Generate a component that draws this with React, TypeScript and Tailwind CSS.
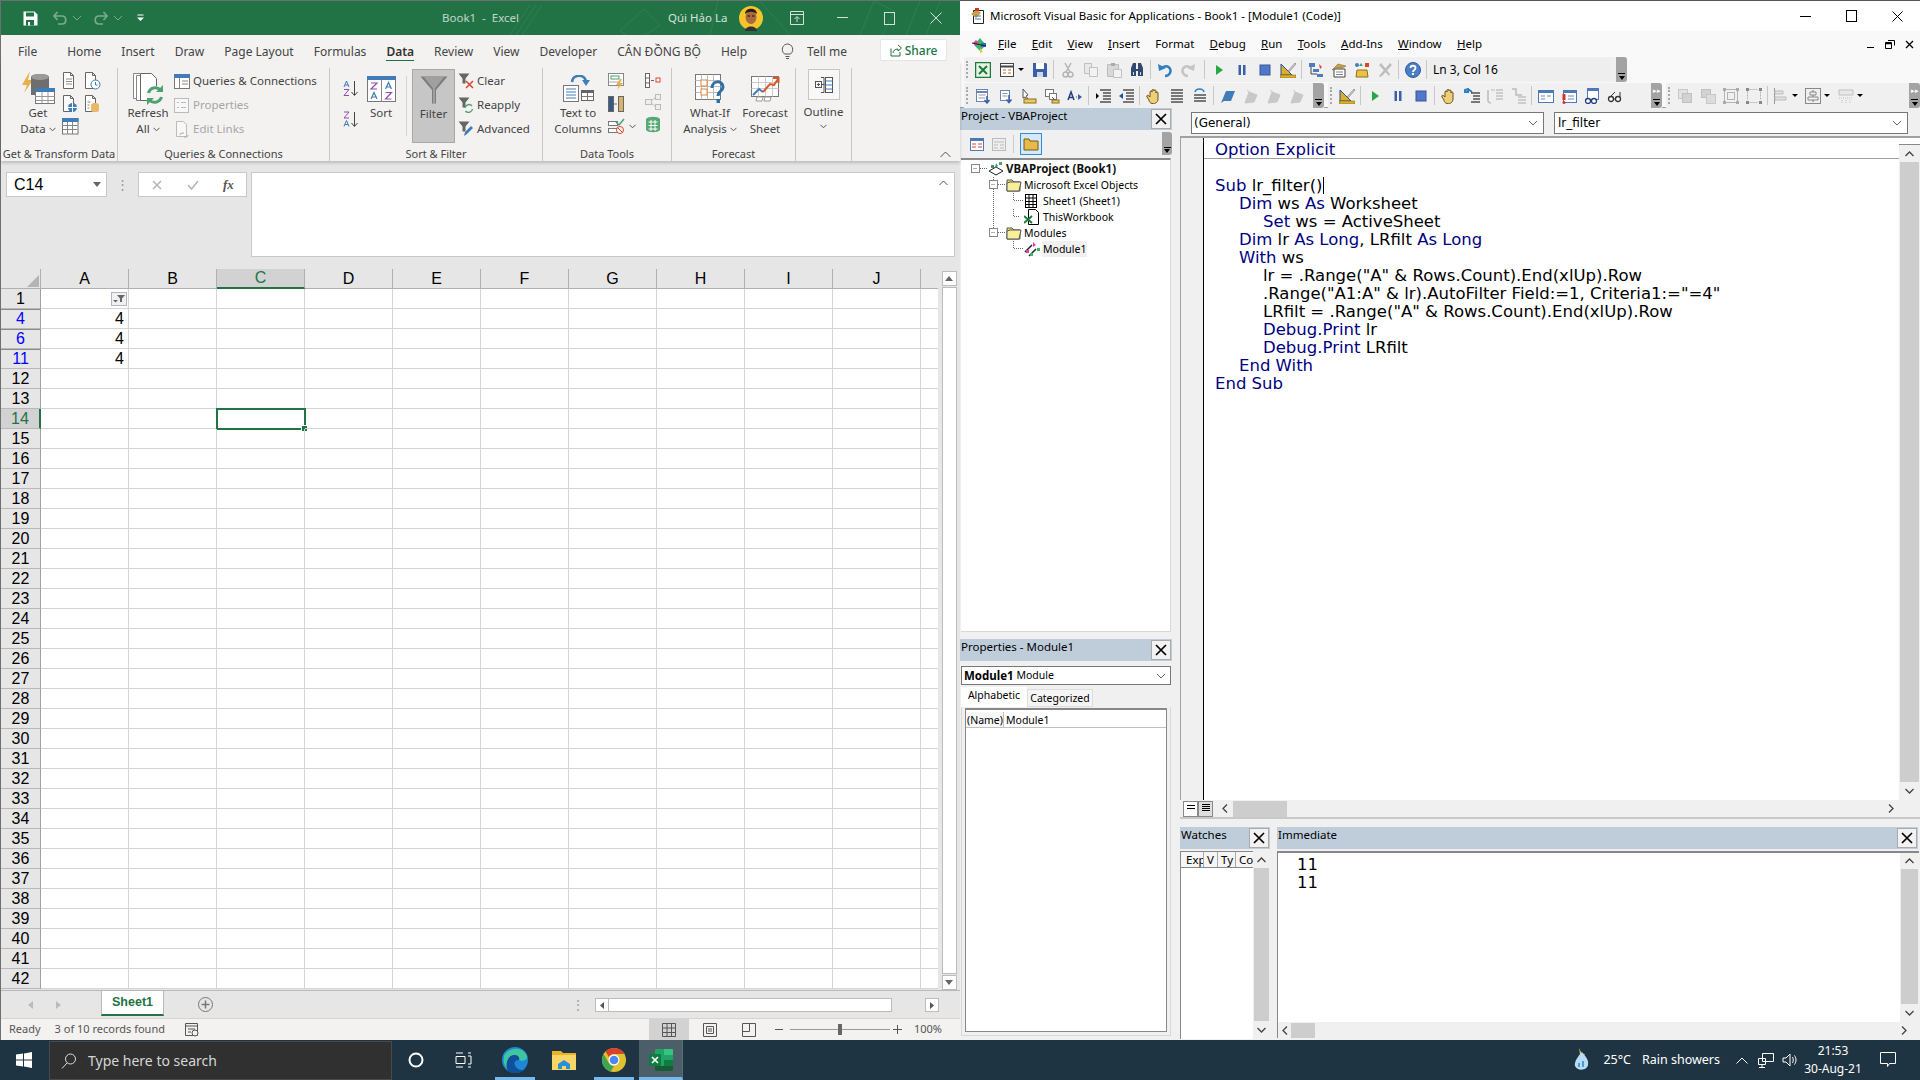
import React from 'react';

type SP = { w?: number; h?: number; v?: string; className?: string; children?: React.ReactNode };
const S = ({ w = 16, h = 16, v, className, children }: SP) => (
    <svg width={w} height={h} viewBox={v || `0 0 ${w} ${h}`} className={`shrink-0 ${className || ''}`} fill="none">{children}</svg>
);

const Caret = ({ c = '#555' }: { c?: string }) => (
    <S w={7} h={5}><path d="M.5 .8 3.5 3.8 6.5 .8" stroke={c} /></S>
);

// ---------- ribbon icons
const Doc = ({ c = '#666' }: { c?: string }) => <path d="M1.5 .5h7l3 3v13h-10z M8.5 .5v3h3" stroke={c} fill="#fff" />;
const IcGetData = () => (
    <S w={34} h={36}>
        <path d="M9 0 1 14h5L3 22 12 9H7z" fill="#e8b04c" />
        <path d="M10 6c0-4 18-4 18 0v18H10z" fill="#6e6e6e" />
        <ellipse cx="19" cy="6" rx="9" ry="3" fill="#9a9a9a" />
        <rect x="14.500" y="17.500" width="19" height="15" fill="#fff" stroke="#777" />
        <rect x="14" y="17" width="20" height="4" fill="#3f7cb8" />
        <path d="M14.500 25.500h19M14.500 29.500h19M21 21v11M27 21v11" stroke="#999" />
    </S>
);
const IcText = () => <S w={16} h={18}><Doc /><path d="M4 7h6M4 9.500h6M4 12h6" stroke="#888" /></S>;
const IcWeb = () => <S w={16} h={18}><Doc /><circle cx="10.500" cy="12.500" r="4.500" fill="#3f7cb8" /><path d="M6 12.500h9M10.500 8v9" stroke="#fff" /></S>;
const IcRecent = () => <S w={17} h={18}><Doc /><circle cx="11.500" cy="12.500" r="4.500" fill="#fff" stroke="#3f7cb8" /><path d="M11.500 10v3h2" stroke="#3f7cb8" /></S>;
const IcExisting = () => <S w={17} h={18}><Doc /><path d="M7 9.500c0-2 8-2 8 0v6c0 2-8 2-8 0z" fill="#e8b96a" /><path d="M3.500 7h3M3.500 10h2M3.500 13h2" stroke="#888" /></S>;
const IcTable = () => (
    <S w={17} h={17}>
        <rect x=".5" y=".5" width="15.500" height="15.500" fill="#fff" stroke="#777" />
        <rect width="16.500" height="4" fill="#3f7cb8" />
        <path d="M.5 7.500h15M.5 11.500h15M5.500 4v12M10.500 4v12" stroke="#888" />
    </S>
);
const IcRefresh = () => (
    <S w={33} h={33}>
        <path d="M1.500 1.500h14v25h-14z" fill="#fff" stroke="#888" />
        <path d="M4.500 3.500h14v25h-14z" fill="#fff" stroke="#888" />
        <path d="M8.500 1.500h11l5 5v22h-16z" fill="#fff" stroke="#666" />
        <circle cx="23" cy="23" r="9" fill="#f3f2f1" />
        <path d="M16.500 21a7 7 0 0 1 12-3M29.500 25a7 7 0 0 1-12 3" stroke="#4ea072" strokeWidth="3" />
        <path d="M31 13v7h-7zM15 33v-7h7z" fill="#4ea072" />
    </S>
);
const IcQueries = () => (
    <S w={16} h={15}>
        <rect x=".5" y=".5" width="15" height="14" fill="#fff" stroke="#777" />
        <rect width="16" height="4" fill="#3f7cb8" />
        <path d="M5.500 4v10M8 7h6M8 10h6" stroke="#888" />
    </S>
);
const IcProps = () => (
    <S w={15} h={15}>
        <rect x=".5" y=".5" width="14" height="14" fill="#f7f7f7" stroke="#bbb" />
        <path d="M3 4.500h2M3 9.500h2M7 4.500h5M7 9.500h5" stroke="#bbb" />
    </S>
);
const IcLinks = () => (
    <S w={15} h={17}>
        <path d="M2.500 .5h7l3 3v12h-10z" stroke="#bbb" fill="#f7f7f7" />
        <path d="M6 14a2 2 0 0 1 2-2h2M14 14a2 2 0 0 1-2 2h-2" stroke="#aaa" />
    </S>
);
const IcAZ = ({ up }: { up?: boolean }) => (
    <S w={15} h={17}>
        <path d="M11.500 1v14M8.500 12l3 3.500 3-3.500" stroke="#444" />
        <path d={up ? 'M1 7 3.500 1 6 7M1.800 5h3.400' : 'M1 1h5L1 7h5'} stroke={up ? '#3f7cb8' : '#8a4fb0'} />
        <path d={up ? 'M1 9.500h5L1 15.500h5' : 'M1 15.500 3.500 9.500 6 15.500M1.800 13.500h3.400'} stroke={up ? '#8a4fb0' : '#3f7cb8'} />
    </S>
);
const IcSort = () => (
    <S w={29} h={26}>
        <rect x=".5" y=".5" width="28" height="25" fill="#fff" stroke="#777" />
        <rect width="29" height="4" fill="#3f7cb8" />
        <path d="M14.500 4v22" stroke="#888" />
        <path d="M4 7h6L4 13h6" stroke="#8a4fb0" strokeWidth="1.200" />
        <path d="M18.500 13 21.500 6.500 24.500 13M19.500 11h4" stroke="#3f7cb8" strokeWidth="1.200" />
        <path d="M4 23 7 16.500 10 23M5 21h4" stroke="#3f7cb8" strokeWidth="1.200" />
        <path d="M18.500 16.500h6l-6 6.500h6" stroke="#8a4fb0" strokeWidth="1.200" />
    </S>
);
const IcFunnel = () => (
    <S w={28} h={28}>
        <path d="M.5 .5h27L16 14v13.500h-4V14z" fill="#7d7d7d" />
        <path d="M4 1 13 12.500v15h2v-15L24 1z" fill="#a0a0a0" />
    </S>
);
const Fun = ({ c = '#666' }: { c?: string }) => <path d="M.5 .5h11L7.500 5.500v5h-3v-5z" fill={c} />;
const IcClear = () => <S w={16} h={16}><Fun /><path d="M8 8l7 7M15 8l-7 7" stroke="#d9452b" strokeWidth="1.500" /></S>;
const IcReapply = () => <S w={16} h={16}><Fun /><path d="M7 11a4 4 0 0 1 7-2M14.500 12a4 4 0 0 1-7 2" stroke="#4ea072" strokeWidth="1.500" /></S>;
const IcAdvanced = () => <S w={16} h={16}><Fun /><path d="M6 15l1-4 6-6 2 2-6 6z" fill="#3f7cb8" /></S>;
const IcTextCol = () => (
    <S w={31} h={27}>
        <path d="M9 7c1-8 12-8 14-1" stroke="#3f7cb8" strokeWidth="2.500" />
        <path d="M19 5h8l-4 6z" fill="#3f7cb8" />
        <rect x=".5" y="10.500" width="15" height="16" fill="#fff" stroke="#777" />
        <path d="M3 14h10M3 17h10M3 20h10M3 23h10" stroke="#3f7cb8" />
        <rect x="18.500" y="15.500" width="12" height="10" fill="#fff" stroke="#666" />
        <rect x="18" y="15" width="13" height="3" fill="#666" />
        <path d="M24.500 18v7M18.500 21.500h12" stroke="#777" />
    </S>
);
const IcFlash = () => (
    <S w={17} h={17}>
        <rect x=".5" y=".5" width="15" height="12" fill="#fff" stroke="#888" />
        <rect x="3" y="3" width="8" height="3" fill="#fff" stroke="#4ea072" />
        <path d="M.5 9h11" stroke="#aaa" />
        <path d="M12 6 8 12h3l-2 5 6-7h-3l2-4z" fill="#e8b04c" />
    </S>
);
const IcDup = () => (
    <S w={16} h={16}>
        <rect x=".5" y=".5" width="5" height="15" fill="#3a5a86" stroke="#666" />
        <rect x="10.500" y=".5" width="5" height="15" fill="#d8b26a" stroke="#666" />
        <path d="M6 8h3" stroke="#3f7cb8" />
    </S>
);
const IcValid = () => (
    <S w={17} h={16}>
        <rect x=".5" y="3.500" width="9" height="4" fill="#fff" stroke="#777" />
        <rect x=".5" y="10.500" width="9" height="4" fill="#fff" stroke="#777" />
        <path d="M8 4l3 3 5-6" stroke="#4ea072" strokeWidth="1.500" />
        <circle cx="12" cy="12" r="3.500" fill="#fff" stroke="#d9452b" />
        <path d="M9.500 9.500l5 5" stroke="#d9452b" />
    </S>
);
const IcConsol = () => (
    <S w={16} h={15}>
        <rect x=".5" y=".5" width="4" height="14" fill="#fff" stroke="#666" />
        <path d="M.5 5h4M.5 10h4M6 7.500h3" stroke="#666" />
        <rect x="11" y="5" width="4" height="4" fill="#fff" stroke="#d9452b" />
    </S>
);
const IcRel = () => (
    <S w={16} h={16}>
        <rect x=".5" y="5.500" width="6" height="5" fill="#eee" stroke="#bbb" />
        <rect x="10.500" y=".5" width="5" height="5" fill="#eee" stroke="#bbb" />
        <rect x="10.500" y="10.500" width="5" height="5" fill="#eee" stroke="#bbb" />
        <path d="M6 7l5-4M6 9l5 4" stroke="#bbb" />
    </S>
);
const IcModel = () => (
    <S w={16} h={17}>
        <path d="M1 3c2-3 12-3 14 0v11c-2 3-12 3-14 0z" fill="#57a877" />
        <path d="M3.500 6h9M3.500 9.500h9M3.500 13h9M6 4v11M10 4v11" stroke="#fff" />
    </S>
);
const IcWhatIf = () => (
    <S w={30} h={30}>
        <rect x=".5" y=".5" width="25" height="25" fill="#fff" stroke="#777" />
        <path d="M.5 6.500h25M.5 12.500h25M.5 18.500h25M6.500 .5v25M12.500 .5v25M18.500 .5v25" stroke="#bbb" />
        <rect x="6" y="6" width="6" height="6" fill="#fff" stroke="#e08a3c" />
        <rect x="6" y="15" width="6" height="6" fill="#fff" stroke="#e08a3c" />
        <path d="M17 14c0-8 11-8 11-1 0 4-5 4-5 9" stroke="#2e6fa8" strokeWidth="3" fill="none" />
        <rect x="21.500" y="25" width="3.500" height="4" fill="#2e6fa8" />
    </S>
);
const IcForecast = () => (
    <S w={29} h={26}>
        <rect x=".5" y=".5" width="27" height="20" fill="#fff" stroke="#777" />
        <path d="M.5 6.500h27M.5 12.500h27M7.500 .5v20M14.500 .5v20M21.500 .5v20" stroke="#ccc" />
        <path d="M2 19l6-6 4 3" stroke="#3f7cb8" strokeWidth="2" />
        <path d="M12 16l7-8 4 1 4-6M22 2h5.500v5" stroke="#d9582b" strokeWidth="2" />
        <path d="M6 21h6l-1 4H5zM14 21h6l-1 4h-6z" fill="#fff" stroke="#999" />
    </S>
);
const IcOutline = () => (
    <S w={18} h={16}>
        <rect x=".5" y="4.500" width="6" height="6" stroke="#555" />
        <path d="M2 7.500h3M3.500 6v3M6.500 7.500h3M6 .5h3v15H6" stroke="#555" />
        <rect x="10.500" y=".5" width="7" height="15" fill="#fff" stroke="#555" />
        <path d="M10.500 4h7M10.500 8h7M10.500 12h7" stroke="#3f7cb8" />
    </S>
);

// ---------- vba toolbar icons
const B = '#3a5fa8';
const tb: Record<string, React.ReactNode> = {
    excel: <><rect x=".5" y=".5" width="15" height="15" fill="#e6f4e6" stroke="#1f7a3a" strokeWidth="1.500" /><path d="M4 4l8 8M12 4l-8 8" stroke="#1f7a3a" strokeWidth="2" /></>,
    view: <><rect x="1.500" y="1.500" width="13" height="13" fill="#fff" stroke="#444" /><path d="M1.500 4.500h13" stroke="#444" strokeWidth="2" /><path d="M4 8h3M4 11h3M9 8h3M9 11h3" stroke="#c8671e" /></>,
    save: <><path d="M1 1h13l1 1v13H1z" fill={B} /><rect x="4" y="1" width="8" height="6" fill="#fff" /><rect x="5" y="10" width="6" height="5" fill="#cfd6e8" /></>,
    cut: <path d="M5 1l5 9M11 1 6 10M6 10a2.500 2.500 0 1 1-3 3 2.500 2.500 0 0 1 3-3zM10 10a2.500 2.500 0 1 0 3 3 2.500 2.500 0 0 0-3-3z" stroke="#b4b4b4" strokeWidth="1.500" />,
    copy: <><path d="M1.500 1.500h7v10h-7z" fill="#e8e8e8" stroke="#c0c0c0" /><path d="M6.500 5.500h8v9h-8z" fill="#f2f2f2" stroke="#c0c0c0" /></>,
    paste: <><path d="M1.500 2.500h11v12h-11z" fill="#d8d8d8" stroke="#bcbcbc" /><path d="M5 1h4v3H5z" fill="#aaa" /><path d="M7.500 7.500h8v8h-8z" fill="#f2f2f2" stroke="#c0c0c0" /></>,
    find: <><path d="M2 6 4 1h3v6h2V1h3l2 5v8H9V9H7v5H2z" fill="#33486e" /><path d="M4 10h1v3H4zM11 10h1v3h-1z" fill="#cdd7ea" /></>,
    undo: <><path d="M5 6c5-4 10 0 8 5-1 2-3 3-5 3" stroke="#2f7fc4" strokeWidth="2.500" /><path d="M1 2l1 7 7-3z" fill="#2f7fc4" /></>,
    redo: <><path d="M11 6C6 2 1 6 3 11c1 2 3 3 5 3" stroke="#c4c4c4" strokeWidth="2.500" /><path d="M15 2l-1 7-7-3z" fill="#c4c4c4" /></>,
    run: <path d="M5 3l7 5-7 5z" fill="#28a745" />,
    pause: <path d="M4.500 3h2.500v10H4.500zM9 3h2.500v10H9z" fill={B} />,
    stop: <rect x="3" y="3" width="10" height="10" fill="#5078c8" stroke="#38569a" />,
    design: <><path d="M1 2l11 11H1z" fill="#dcae2a" stroke="#254f9c" /><path d="M8 9l7-8 1 1-7 8z" fill="#d9d9d9" stroke="#555" strokeWidth=".5" /><rect y="13" width="16" height="3" fill="#dcae2a" stroke="#7a5a10" strokeWidth=".5" /></>,
    project: <><path d="M1 1h6v4H1zM5 7h6v3H5zM9 12h6v3H9z" fill="#4e7ac2" /><path d="M3 5v7h6" stroke="#444" /><path d="M11 2l3 3-2 2z" fill="#d9452b" /></>,
    props: <><path d="M3 7h11v8H3z" fill="#fff" stroke="#444" /><path d="M5 10h7M5 12.500h7" stroke="#888" /><path d="M1 8 7 2l8 2-4 2H5z" fill="#c8a04a" stroke="#7a5a10" strokeWidth=".5" /></>,
    toolbox: <><path d="M3 8h10l1 7H2z" fill="#e9c24a" stroke="#8f6e12" /><circle cx="3" cy="3" r="2" fill="#3f7cb8" /><rect x="11" y="1" width="4" height="4" fill="#d9452b" /><path d="M7 1l2 3H5z" fill="#4ea072" /></>,
    tools: <path d="M2 3l2-2 9 11-1 2zM13 1l2 2-10 11-2 1-1-1z" fill="#bdbdbd" />,
    help: <><circle cx="8" cy="8" r="7.500" fill="#4a7fc8" stroke="#2f5a9c" /><path d="M5.500 6c0-3 5-3 5 0 0 2-2.500 2-2.500 4" stroke="#fff" strokeWidth="1.800" /><rect x="7" y="11" width="2" height="2" fill="#fff" /></>,
    list: <><rect x="1.500" y="1.500" width="11" height="12" fill="#fff" stroke="#6a86b4" /><path d="M1.500 4h11" stroke="#6a86b4" strokeWidth="2" /><path d="M3.500 7h7M3.500 10h7" stroke="#999" /><path d="M12 8v6M9.500 12l2.500 3 2.500-3" stroke={B} strokeWidth="1.500" /></>,
    con: <><rect x="2.500" y="2.500" width="9" height="10" fill="#fff" stroke="#6a86b4" /><path d="M4.500 5.500h5M4.500 8h5" stroke="#999" /><path d="M11 7v7M8.500 11.500l2.500 3 2.500-3" stroke={B} strokeWidth="1.500" /></>,
    para: <><path d="M2 1l5 6-2 1 2 3-1 1-2-3-2 1z" fill="#fff" stroke="#555" /><rect x="3" y="11" width="12" height="4" fill="#e6c96a" stroke="#8f6e12" /></>,
    info: <><rect x="1.500" y="1.500" width="8" height="7" fill="#fff" stroke="#777" /><rect x="5.500" y="5.500" width="7" height="6" fill="#fff" stroke="#777" /><path d="M8 9l3 3" stroke={B} /><rect x="8" y="12" width="7" height="3" fill="#e6c96a" stroke="#8f6e12" /></>,
    az: <><path d="M1 12 4 4l3 8M2 9.500h4" stroke="#23407a" strokeWidth="1.500" /><path d="M9 9h3" stroke="#555" strokeDasharray="1 1" /><path d="M11 6l4 3-4 3z" fill={B} /></>,
    indent: <><path d="M5 2h11M8 5h8M8 8h8M8 11h8M5 14h11" stroke="#000" /><path d="M1 5l3 3-3 3z" fill="#000" /></>,
    outdent: <><path d="M5 2h11M8 5h8M8 8h8M8 11h8M5 14h11" stroke="#000" /><path d="M5 5 1 8l4 3z" fill="#1f4fa8" /></>,
    hand: <path d="M4 9V4c0-1.500 2-1.500 2 0V2.500c0-1.500 2-1.500 2 0V3c0-1.500 2-1.500 2 0v2c0-1.500 2-1.500 2 0v6c0 6-9 6-9 1L1 9c-1-2 1-2 2-1z" fill="#eccf7a" stroke="#6e5210" />,
    comment: <path d="M2 2h12M2 5h12M2 8h12M2 11h12M2 14h12" stroke="#000" />,
    uncomment: <><path d="M2 7h12M2 10h12M2 13h12" stroke="#000" /><path d="M3 4c1-4 8-4 9 0" stroke="#2f7fc4" strokeWidth="1.500" /></>,
    flag: <path d="M1 15 6 3h9l-4 10H4z" fill="#3f7cb8" />,
    flagG: <path d="M2 15 6 4l8 3-3 7zM4 2l5 4" fill="#c8c8c8" stroke="#c8c8c8" />,
    bp: <><path d="M1 2l3-1v3H1zM4 1l4 3" stroke="#2f7fc4" strokeWidth="2" /><path d="M7 5h9M9 8h7M9 11h7M7 14h9" stroke="#000" /></>,
    bpG: <><path d="M1 2v11c0 1 2 2 3 2" stroke="#bbb" strokeWidth="1.500" /><path d="M4 2h4" stroke="#bbb" /><path d="M9 2h7M9 5h7M9 8h7M9 11h7" stroke="#aaa" /></>,
    stG: <><path d="M2 1h4v6h6" stroke="#bbb" strokeWidth="1.500" /><path d="M8 9h8M8 12h8M8 15h8" stroke="#aaa" /></>,
    form: <><rect x=".5" y="2.500" width="15" height="12" fill="#fff" stroke="#4e78b8" /><rect y="2" width="16" height="3" fill="#4e78b8" /><path d="M3 8h4M3 11h4M9 8h4" stroke="#6a86b4" /></>,
    formR: <><rect x="2.500" y="2.500" width="13" height="12" fill="#fff" stroke="#4e78b8" /><rect x="2" y="2" width="14" height="3" fill="#4e78b8" /><path d="M7 8h6M7 11h6" stroke="#6a86b4" /><path d="M3 6v6" stroke="#d9302b" strokeWidth="3" /><circle cx="3" cy="14.500" r="1.500" fill="#d9302b" /></>,
    formG: <><rect x="3.500" y=".5" width="11" height="11" fill="#fff" stroke="#4e78b8" /><rect x="3" width="12" height="3" fill="#4e78b8" /><circle cx="4" cy="13" r="2.500" fill="#fff" stroke="#23407a" strokeWidth="1.300" /><circle cx="10" cy="13" r="2.500" fill="#fff" stroke="#23407a" strokeWidth="1.300" /></>,
    glass: <><circle cx="4" cy="11" r="2.500" fill="#fff" stroke="#333" strokeWidth="1.300" /><circle cx="11" cy="11" r="2.500" fill="#fff" stroke="#333" strokeWidth="1.300" /><path d="M6 11h3M4 8l4-4M13 9V4" stroke="#333" /></>,
    g1: <><rect x="1.500" y="1.500" width="9" height="9" fill="#e2e2e2" stroke="#c8c8c8" /><rect x="5.500" y="5.500" width="9" height="9" fill="#d2d2d2" stroke="#c0c0c0" /></>,
    g2: <><rect x="1.500" y="1.500" width="9" height="8" fill="#d2d2d2" stroke="#c0c0c0" /><rect x="6.500" y="6.500" width="9" height="9" fill="#dcdcdc" stroke="#c8c8c8" /></>,
    g3: <><rect x="1.500" y="1.500" width="13" height="13" stroke="#b4b4b4" /><rect x="4.500" y="4.500" width="7" height="7" stroke="#b4b4b4" /><path d="M0 0h3v3H0zM13 0h3v3h-3zM0 13h3v3H0zM13 13h3v3h-3z" fill="#aaa" /></>,
    g4: <><path d="M3.500 1.500h9M3.500 14.500h9M1.500 3.500v9M14.500 3.500v9" stroke="#b4b4b4" strokeDasharray="2 1" /><path d="M0 0h3v3H0zM13 0h3v3h-3zM0 13h3v3H0zM13 13h3v3h-3z" fill="#888" /></>,
    g5: <><path d="M1.500 0v16" stroke="#999" /><path d="M2 3h8v3H2zM2 9h11v3H2z" fill="#e2e2e2" stroke="#bbb" /></>,
    g6: <><rect x=".5" y=".5" width="15" height="15" stroke="#888" /><path d="M8 2v12" stroke="#777" /><path d="M5 4h6v3H5zM3 9h10v3H3z" fill="#f2f2f2" stroke="#888" /></>,
    g7: <><path d="M1 2h14v5H1z" fill="#e8e8e8" stroke="#c0c0c0" /><path d="M1 10h14M4 12v3M8 12v3M12 12v3" stroke="#c0c0c0" strokeDasharray="1 1" /></>,
};

const T = ({ n, w = 23, arrow }: { n: string; w?: number; arrow?: boolean }) => (
    <div className="flex items-center justify-center shrink-0" style={{ width: w }}>
        <S>{tb[n]}</S>
        {arrow && <span className="ml-[3px] w-0 h-0 border-l-[3px] border-r-[3px] border-t-[3px] border-l-transparent border-r-transparent border-t-black" />}
    </div>
);
const Sep = () => <div className="w-px h-[19px] bg-[#c8c8c8] mx-[2px] shrink-0" />;
const Grip = () => <div className="w-[2px] h-[17px] mr-[3px] ml-[2px] shrink-0 border-l-2 border-dotted border-[#a8a8a8]" />;
const EndGrip = ({ dbl }: { dbl?: boolean }) => (
    <div className="ml-auto self-stretch w-[11px] shrink-0 bg-[#a3a3a3] rounded-r-[3px] flex flex-col items-center justify-end pb-[2px] gap-[5px]">
        {dbl && <span className="text-white text-[7px] leading-[7px]">▸▸</span>}
        <div className="w-[7px] border-t border-black" />
        <div className="w-0 h-0 -mt-[3px] border-l-[3.5px] border-r-[3.5px] border-t-[4px] border-l-transparent border-r-transparent border-t-black" />
    </div>
);

// ---------- little pieces
const CloseBtn = () => (
    <div className="w-[20px] h-[20px] bg-[#f2f2f2] border border-[#aaa] flex items-center justify-center shrink-0">
        <S w={12} h={12}><path d="M1 1l10 10M11 1 1 11" stroke="#000" strokeWidth="1.700" /></S>
    </div>
);
const PaneTitle = ({ t, className }: { t: string; className: string }) => (
    <div className={`h-[22px] bg-[#bfcddb] flex items-start shrink-0 pr-[1px] ${className}`}>
        <span className="text-[11.500px] leading-[15px] text-black pl-[1px]">{t}</span>
        <div className="ml-auto mt-[1px]"><CloseBtn /></div>
    </div>
);
const Chev = ({ d = 'M1 1l4 4 4-4', c = '#666' }: { d?: string; c?: string }) => <S w={10} h={6}><path d={d} stroke={c} /></S>;
const VArrow = ({ up }: { up?: boolean }) => <S w={9} h={6}><path d={up ? 'M.5 5 4.500 1l4 4' : 'M.5 1l4 4 4-4'} stroke="#444" strokeWidth="1.300" /></S>;
const HArrow = ({ left }: { left?: boolean }) => <S w={6} h={9}><path d={left ? 'M5 .5 1 4.500l4 4' : 'M1 .5l4 4-4 4'} stroke="#444" strokeWidth="1.300" /></S>;

const SmallRow = ({ icon, text, off }: { icon: React.ReactNode; text: string; off?: boolean }) => (
    <div className="h-[24px] flex items-center">
        <div className="w-[18px] flex justify-start">{icon}</div>
        <span className={`ml-[1px] whitespace-nowrap ${off ? 'text-[#a6a6a6]' : ''}`}>{text}</span>
    </div>
);
const Big = ({ icon, a, b, caret, className }: { icon: React.ReactNode; a: string; b?: string; caret?: boolean; className: string }) => (
    <div className={`flex flex-col items-center pt-[10px] shrink-0 leading-[16px] ${className}`}>
        <div className="h-[33px] flex items-center justify-center">{icon}</div>
        <span className="whitespace-nowrap">{a}</span>
        {b && <span className="whitespace-nowrap flex items-center gap-[3px]">{b}{caret && <Caret />}</span>}
    </div>
);
const Group = ({ label, className, children }: { label: string; className: string; children: React.ReactNode }) => (
    <div className={`flex flex-col shrink-0 h-[93px] mt-[6px] border-r border-[#c8c8c8] ${className}`}>
        <div className="flex -mt-[6px] h-[84px]">{children}</div>
        <div className="text-center text-[11px] leading-[15px] whitespace-nowrap">{label}</div>
    </div>
);

const tabs = ['Home', 'Insert', 'Draw', 'Page Layout', 'Formulas', 'Data', 'Review', 'View', 'Developer', 'CÂN ĐỒNG BỘ', 'Help'];
const cols = ['A', 'B', 'C', 'D', 'E', 'F', 'G', 'H', 'I', 'J'];
const rows = [1, 4, 6, 11, ...Array.from({ length: 31 }, (_, i) => i + 12)];

const Ribbon = () => (
    <div className="h-[100px] pt-px flex text-[11.500px] text-[#444] bg-[#f3f2f1] shadow-[0_2px_3px_rgba(0,0,0,0.18)] relative shrink-0">
        <Group label="Get & Transform Data" className="w-[117px]">
            <Big icon={<IcGetData />} a="Get" b="Data" caret className="w-[46px] ml-[14px]" />
            <div className="flex flex-col pt-[10px] gap-[5px] ml-[1px] w-[22px]"><IcText /><IcWeb /><IcTable /></div>
            <div className="flex flex-col pt-[10px] gap-[5px]"><IcRecent /><IcExisting /></div>
        </Group>
        <Group label="Queries & Connections" className="w-[212px]">
            <Big icon={<IcRefresh />} a="Refresh" b="All" caret className="w-[52px] ml-[4px]" />
            <div className="flex flex-col pt-[7px]">
                <SmallRow icon={<IcQueries />} text="Queries & Connections" />
                <SmallRow icon={<IcProps />} text="Properties" off />
                <SmallRow icon={<IcLinks />} text="Edit Links" off />
            </div>
        </Group>
        <Group label="Sort & Filter" className="w-[213px]">
            <div className="flex flex-col ml-[13px] pt-[18px] gap-[14px] w-[20px]"><IcAZ up /><IcAZ /></div>
            <Big icon={<IcSort />} a="Sort" className="w-[36px]" />
            <div className="w-px h-[60px] bg-[#d4d4d4] mt-[14px] ml-[7px] shrink-0" />
            <div className="w-[43px] h-[74px] mt-[7px] ml-[5px] bg-[#c6c6c6] border border-[#a8a8a8] flex flex-col items-center shrink-0">
                <div className="h-[30px] mt-[5px] flex items-center"><IcFunnel /></div>
                <span className="leading-[17px]">Filter</span>
            </div>
            <div className="flex flex-col pt-[7px] ml-[3px]">
                <SmallRow icon={<IcClear />} text="Clear" />
                <SmallRow icon={<IcReapply />} text="Reapply" />
                <SmallRow icon={<IcAdvanced />} text="Advanced" />
            </div>
        </Group>
        <Group label="Data Tools" className="w-[129px]">
            <Big icon={<IcTextCol />} a="Text to" b="Columns" className="w-[58px] ml-[6px]" />
            <div className="flex flex-col pt-[11px] gap-[6px] ml-[1px] w-[37px]">
                <IcFlash /><IcDup />
                <div className="flex items-center gap-[4px]"><IcValid /><Caret /></div>
            </div>
            <div className="flex flex-col pt-[11px] gap-[6px]"><IcConsol /><IcRel /><IcModel /></div>
        </Group>
        <Group label="Forecast" className="w-[124px]">
            <Big icon={<IcWhatIf />} a="What-If" b="Analysis" caret className="w-[66px] ml-[5px]" />
            <Big icon={<IcForecast />} a="Forecast" b="Sheet" className="w-[44px]" />
        </Group>
        <div className="w-[56px] h-[93px] mt-[6px] border-r border-[#c8c8c8] shrink-0 flex flex-col items-center">
            <div className="w-[32px] h-[31px] mt-[1px] bg-[#f8f8f8] border border-[#c6c6c6] flex items-center justify-center"><IcOutline /></div>
            <span className="leading-[17px] mt-[3px]">Outline</span>
            <div className="mt-[4px]"><Caret /></div>
        </div>
        <div className="ml-auto self-end pb-[3px] pr-[9px]"><S w={11} h={7}><path d="M.5 6 5.500 1l5 5" stroke="#555" /></S></div>
    </div>
);

const Sheet = () => (
    <div className="flex flex-1 bg-[#e6e6e6] min-h-0">
        <div className="flex-1 flex flex-col font-['Liberation_Sans',sans-serif] text-[16px] text-black min-w-0">
            <div className="flex h-[20px] shrink-0">
                <div className="w-[40px] bg-[#e6e6e6] border-r border-[#b0b0b0] border-b flex items-end justify-end pr-[1px] pb-[1px]">
                    <div className="w-0 h-0 border-l-[12px] border-b-[12px] border-l-transparent border-b-[#b4b4b4]" />
                </div>
                {cols.map((c) => (
                    <div key={c} className={`w-[88px] flex items-center justify-center border-r ${c === 'C' ? 'bg-[#d2d2d2] text-[#217346] border-b-2 border-b-[#217346] border-r-[#b0b0b0]' : 'bg-[#e6e6e6] border-b border-[#b0b0b0]'}`}>{c}</div>
                ))}
                <div className="flex-1 border-b border-[#b0b0b0]" />
            </div>
            {rows.map((r) => {
                const hid = r === 4 || r === 6 || r === 11;
                return (
                    <div key={r} className="flex h-[20px] bg-white shrink-0">
                        <div className={`w-[40px] flex items-center justify-center border-b border-[#b8b8b8] ${r === 14 ? 'bg-[#d2d2d2] text-[#217346] border-r-2 border-r-[#217346]' : 'bg-[#e6e6e6] border-r border-r-[#a0a0a0]'} ${hid ? 'text-[#0000ff] border-t border-t-[#8c8c8c]' : ''}`}>{r}</div>
                        {cols.map((c) => (
                            <div key={c} className="w-[88px] relative border-r border-b border-[#d4d4d4] flex items-center justify-end pr-[4px]">
                                {c === 'A' && r === 1 && (
                                    <div className="w-[16px] h-[14px] bg-[#f0f0f0] border border-[#b4b4c8] -mr-[3px] flex items-center justify-center">
                                        <S w={12} h={9}><path d="M4 1h8L9 4.500V8H7V4.500z" fill="#666" /><path d="M0 6h5L2.500 8.500z" fill="#666" /></S>
                                    </div>
                                )}
                                {c === 'A' && hid && '4'}
                                {c === 'C' && r === 14 && (
                                    <div className="absolute -left-[1px] -top-[1px] w-[90px] h-[22px] border-2 border-[#217346]">
                                        <div className="absolute -right-[3px] -bottom-[3px] w-[5px] h-[5px] bg-[#217346] border border-white box-content -mr-px -mb-px" />
                                    </div>
                                )}
                            </div>
                        ))}
                        <div className="flex-1 border-b border-[#d4d4d4]" />
                    </div>
                );
            })}
        </div>
        <div className="w-[22px] flex flex-col items-center pt-[2px] pr-[3px] pl-[3px]">
            <div className="w-[15px] h-[15px] bg-white border border-[#bbb] flex items-center justify-center"><span className="w-0 h-0 border-l-[4px] border-r-[4px] border-b-[5px] border-l-transparent border-r-transparent border-b-[#666]" /></div>
            <div className="w-[15px] flex-1 bg-white border border-[#bbb] mt-[1px]" />
            <div className="w-[15px] h-[15px] bg-white border border-[#bbb] mt-[1px] flex items-center justify-center"><span className="w-0 h-0 border-l-[4px] border-r-[4px] border-t-[5px] border-l-transparent border-r-transparent border-t-[#666]" /></div>
        </div>
    </div>
);

const Excel = () => (
    <div className="w-[960px] shrink-0 flex flex-col border-l border-t border-[#6f6f6f] bg-[#f3f2f1] text-[#444]">
        {/* title bar */}
        <div className="h-[34px] bg-[#217346] flex items-center text-white text-[11.500px] shrink-0 relative overflow-hidden">
            <S w={460} h={34} className="absolute right-0 top-0 opacity-[0.07]">
                <path d="M10 34 30 4M16 34 36 4M22 34 42 4M120 30l24-22 16 16-24 16zM210 34l8-34M260 0l30 34M360 34l14-34 20 10-14 30zM420 0l-14 34M440 0l-14 34" stroke="#fff" />
            </S>
            <div className="ml-[22px]"><S w={15} h={15}><path d="M.5 .5h11l3 3v11H.5z" fill="#fff" /><rect x="3" y="1.500" width="8" height="4" fill="#217346" /><rect x="3" y="9" width="8" height="5.500" fill="#217346" /><rect x="5" y="11" width="2" height="3.500" fill="#fff" /></S></div>
            <div className="ml-[14px] flex items-center gap-[4px] opacity-40">
                <S w={16} h={14}><path d="M3 5h7c5 0 5 8 0 8H6M5.500 1 2 5l3.500 4" stroke="#fff" strokeWidth="1.700" /></S><Chev c="#fff" />
            </div>
            <div className="ml-[11px] flex items-center gap-[4px] opacity-40">
                <S w={16} h={14}><path d="M13 5H6c-5 0-5 8 0 8h4M10.500 1 14 5l-3.500 4" stroke="#fff" strokeWidth="1.700" /></S><Chev c="#fff" />
            </div>
            <div className="ml-[14px]"><S w={7} h={8}><path d="M.5 1h6" stroke="#fff" /><path d="M0 3.500h7L3.500 7z" fill="#fff" /></S></div>
            <span className="ml-[298px] opacity-70 whitespace-nowrap">Book1&nbsp; -&nbsp; Excel</span>
            <span className="ml-[149px] opacity-80 whitespace-nowrap">Qúi Hảo La</span>
            <div className="ml-[12px]">
                <S w={24} h={26}>
                    <circle cx="12" cy="13" r="12" fill="#f4c42a" />
                    <path d="M6 26c0-6 12-6 12 0z" fill="#333" />
                    <ellipse cx="12" cy="12" rx="5.500" ry="7" fill="#a86a3c" />
                    <path d="M6 9c0-7 12-7 12 0-3-3-9-3-12 0z" fill="#2a1c14" />
                    <path d="M8.500 11h2.500M13 11h2.500" stroke="#111" />
                </S>
            </div>
            <div className="ml-[27px]"><S w={14} h={14} className="opacity-80"><path d="M.5 .5h13v13H.5zM.5 3.500h13M7 11V6M4.500 8 7 5.500 9.500 8" stroke="#fff" /></S></div>
            <div className="ml-[33px]"><S w={11} h={2} className="opacity-80"><path d="M0 .5h11" stroke="#fff" /></S></div>
            <div className="ml-[36px]"><S w={11} h={13} className="opacity-80"><rect x=".5" y=".5" width="10" height="12" stroke="#fff" /></S></div>
            <div className="ml-[35px]"><S w={12} h={12} className="opacity-80"><path d="M.5 .5l11 11M11.500 .5l-11 11" stroke="#fff" /></S></div>
        </div>
        {/* tabs */}
        <div className="h-[26px] flex items-start pt-[8px] leading-[17px] text-[12px] shrink-0">
            <span className="ml-[17px] mr-[30px]">File</span>
            <div className="flex gap-[20px]">
                {tabs.map((t) => (
                    <span key={t} className={`whitespace-nowrap h-[19px] ${t === 'Data' ? 'font-semibold text-[#333] border-b-2 border-[#217346]' : ''}`}>{t}</span>
                ))}
            </div>
            <div className="ml-[34px]"><S w={13} h={17}><path d="M3.500 11C-1 7 2 1 6.500 1s7.500 6 3 10zM4.500 13.500h4M5 15.500h3" stroke="#555" /></S></div>
            <span className="ml-[13px]">Tell me</span>
            <div className="ml-auto mr-[13px] -mt-[4px] w-[67px] h-[22px] bg-white border border-[#e6e6e6] rounded-[2px] flex items-center justify-center gap-[3px] text-[#217346] font-medium">
                <S w={12} h={13}><path d="M8 1l3.500 3L8 7V5C5 5 3 7 3 9M1 4.500V12h9V8" stroke="#217346" /></S>Share
            </div>
        </div>
        <Ribbon />
        {/* formula bar */}
        <div className="h-[108px] bg-[#e6e6e6] flex items-start pt-[11px] pl-[5px] shrink-0">
            <div className="w-[101px] h-[25px] bg-white border border-[#c8c8c8] flex items-center pl-[7px] text-[16px] text-black font-['Liberation_Sans',sans-serif]">C14
                <span className="ml-auto mr-[5px] w-0 h-0 border-l-[4px] border-r-[4px] border-t-[5px] border-l-transparent border-r-transparent border-t-[#666]" />
            </div>
            <div className="w-[31px] h-[25px] flex items-center justify-center text-[#999] text-[13px]">⋮</div>
            <div className="w-[109px] h-[25px] bg-white border border-[#c8c8c8] flex items-center gap-[23px] pl-[12px] text-[#aaa]">
                <S w={12} h={12}><path d="M2 2l8 8M10 2l-8 8" stroke="#b4b4b4" strokeWidth="1.500" /></S>
                <S w={14} h={12}><path d="M2 6l3.500 4L12 2" stroke="#b4b4b4" strokeWidth="1.500" /></S>
                <i className="text-[#555] font-['Liberation_Serif',serif] font-bold text-[13px]">fx</i>
            </div>
            <div className="w-[704px] h-[85px] ml-[4px] bg-white border border-[#c8c8c8] flex justify-end pt-[7px] pr-[6px]">
                <S w={9} h={6}><path d="M.5 5 4.500 1l4 4" stroke="#555" /></S>
            </div>
        </div>
        <Sheet />
        {/* sheet tabs */}
        <div className="h-[28px] bg-[#e6e6e6] flex items-start border-t border-[#b8b8b8] shrink-0">
            <div className="ml-[27px]  mt-[10px]"><S w={5} h={8}><path d="M5 0v8L0 4z" fill="#bbb" /></S></div>
            <div className="ml-[23px] mt-[10px]"><S w={5} h={8}><path d="M0 0v8l5-4z" fill="#bbb" /></S></div>
            <div className="ml-[40px] w-[63px] h-[25px] bg-white border-x border-[#b8b8b8] border-b-2 border-b-[#217346] flex items-center justify-center font-['Liberation_Sans',sans-serif] font-bold text-[12.500px] text-[#217346]">Sheet1</div>
            <div className="ml-[34px] mt-[6px]"><S w={15} h={15}><circle cx="7.500" cy="7.500" r="7" stroke="#777" /><path d="M7.500 3.500v8M3.500 7.500h8" stroke="#777" strokeWidth="1.500" /></S></div>
            <div className="ml-[359px] mt-[6px] text-[#999] text-[12px] leading-[15px]">⋮</div>
            <div className="ml-[11px] mt-[7px] w-[344px] h-[14px] flex">
                <div className="w-[14px] bg-white border border-[#bbb] flex items-center justify-center"><S w={4} h={7}><path d="M4 0v7L0 3.500z" fill="#555" /></S></div>
                <div className="flex-1 bg-white border border-l-0 border-[#bbb] mr-[33px]" />
                <div className="w-[14px] bg-white border border-[#bbb] flex items-center justify-center"><S w={4} h={7}><path d="M0 0v7l4-3.500z" fill="#555" /></S></div>
            </div>
        </div>
        {/* status bar */}
        <div className="h-[22px] bg-[#f3f2f1] border-t border-[#d4d4d4] flex items-center text-[11px] text-[#555] shrink-0">
            <span className="ml-[8px]">Ready</span>
            <span className="ml-[14px]">3 of 10 records found</span>
            <div className="ml-[20px]"><S w={15} h={14}><path d="M.5 .5h12v12H.5zM.5 3h12M3 6h7M3 9h3" stroke="#555" /><circle cx="10" cy="10" r="3" fill="#f3f2f1" stroke="#555" /></S></div>
            <div className="ml-[449px] w-[40px] h-full bg-[#d2d2d2] flex items-center justify-center"><S w={14} h={14}><path d="M.5 .5h13v13H.5zM.5 5h13M.5 9.500h13M5 .5v13M9.500 .5v13" stroke="#555" /></S></div>
            <div className="ml-[14px]"><S w={14} h={14}><path d="M.5 .5h13v13H.5zM3.500 3.500h7v7h-7zM5 6h4M5 8h4" stroke="#555" /></S></div>
            <div className="ml-[25px]"><S w={14} h={14}><path d="M.5 .5h13v13H.5zM7.500 .5v8H.5" stroke="#555" /></S></div>
            <div className="ml-[19px] w-[8px] h-px bg-[#555]" />
            <div className="ml-[7px] w-[100px] h-px bg-[#999] flex items-center justify-center"><div className="w-[4px] h-[11px] bg-[#666] shrink-0" /></div>
            <div className="ml-[3px]"><S w={9} h={9}><path d="M4.500 0v9M0 4.500h9" stroke="#555" /></S></div>
            <span className="ml-[12px]">100%</span>
        </div>
    </div>
);

const codeLines: { i: number; p: [string, boolean][] }[] = [
    { i: 0, p: [['Sub ', true], ['lr_filter()', false]] },
    { i: 1, p: [['Dim ', true], ['ws ', false], ['As ', true], ['Worksheet', false]] },
    { i: 2, p: [['Set ', true], ['ws = ActiveSheet', false]] },
    { i: 1, p: [['Dim ', true], ['lr ', false], ['As Long', true], [', LRfilt ', false], ['As Long', true]] },
    { i: 1, p: [['With ', true], ['ws', false]] },
    { i: 2, p: [['lr = .Range("A" & Rows.Count).End(xlUp).Row', false]] },
    { i: 2, p: [['.Range("A1:A" & lr).AutoFilter Field:=1, Criteria1:="=4"', false]] },
    { i: 2, p: [['LRfilt = .Range("A" & Rows.Count).End(xlUp).Row', false]] },
    { i: 2, p: [['Debug.Print ', true], ['lr', false]] },
    { i: 2, p: [['Debug.Print ', true], ['LRfilt', false]] },
    { i: 1, p: [['End With', true]] },
    { i: 0, p: [['End Sub', true]] },
];
const indent = ['pl-[11px]', 'pl-[35px]', 'pl-[59px]'];

const treeRows: { pre: React.ReactNode; w: number; icon: React.ReactNode; t: string; cls?: string }[] = [
    {
        w: 27, t: 'VBAProject (Book1)', cls: 'font-bold text-[11.500px] text-[#111] ml-[2px]',
        pre: <><rect x="10.500" y="3.500" width="8" height="8" fill="#fff" stroke="#888" /><path d="M12.500 7.500h4M19 7.500h8" stroke="#666" strokeDasharray="1 1" /></>,
        icon: <><path d="M1 10l7-4 7 4-7 4z" fill="#fff" stroke="#222" /><path d="M8 2l2 3-3 2zM3 4h3v3H3z" fill="#3f8f7a" /><path d="M11 1h3v3h-3z" fill="#4ea072" /></>,
    },
    {
        w: 45, t: 'Microsoft Excel Objects', cls: 'ml-[2px]',
        pre: <><path d="M32.500 0v3M32.500 12v4" stroke="#666" strokeDasharray="1 1" /><rect x="28.500" y="3.500" width="8" height="8" fill="#fff" stroke="#888" /><path d="M30.500 7.500h4M37 7.500h8" stroke="#666" strokeDasharray="1 1" /></>,
        icon: <><path d="M1 3h5l2 2h6v9H1z" fill="#f4e36a" stroke="#555" /><path d="M1 6l3-1h11l-2 9H1z" fill="#f9ee9a" stroke="#555" /></>,
    },
    {
        w: 63, t: 'Sheet1 (Sheet1)', cls: 'ml-[3px]',
        pre: <><path d="M32.500 0v16M52.500 0v7.500H63" stroke="#666" strokeDasharray="1 1" /></>,
        icon: <><rect x="1.500" y="1.500" width="11" height="13" fill="#fff" stroke="#000" /><path d="M1.500 5h11M1.500 8.500h11M1.500 11.500h11M5 1.500v13M9 1.500v13" stroke="#000" /></>,
    },
    {
        w: 63, t: 'ThisWorkbook', cls: 'ml-[3px]',
        pre: <><path d="M32.500 0v16M52.500 0v7.500H59" stroke="#666" strokeDasharray="1 1" /></>,
        icon: <><path d="M4.500 .5h7l3 3v12h-10z" fill="#fff" stroke="#000" /><path d="M0 7l8 7M8 7l-8 7" stroke="#1f7a3a" strokeWidth="2" /></>,
    },
    {
        w: 45, t: 'Modules', cls: 'ml-[2px]',
        pre: <><path d="M32.500 0v3" stroke="#666" strokeDasharray="1 1" /><rect x="28.500" y="3.500" width="8" height="8" fill="#fff" stroke="#888" /><path d="M30.500 7.500h4M37 7.500h8" stroke="#666" strokeDasharray="1 1" /></>,
        icon: <><path d="M1 3h5l2 2h6v9H1z" fill="#f4e36a" stroke="#555" /><path d="M1 6l3-1h11l-2 9H1z" fill="#f9ee9a" stroke="#555" /></>,
    },
    {
        w: 63, t: 'Module1', cls: 'ml-[2px] bg-[#f0f0f0] px-[1px]',
        pre: <path d="M52.500 0v7.500H63" stroke="#666" strokeDasharray="1 1" />,
        icon: <><path d="M1 11l7-7M5 15l7-7" stroke="#222" strokeWidth="1.500" /><path d="M9 1l3 3-3 2zM2 9h3v3H2z" fill="#e03bb0" /><path d="M13 7h3v3h-3zM6 12h3v3H6z" fill="#3ab868" /></>,
    },
];

const Vba = () => (
    <div className="w-[960px] shrink-0 flex flex-col bg-[#f0f0f0] border-t border-[#555] font-['Noto_Sans',sans-serif] text-black">
        <div className="h-[30px] bg-white flex items-center shrink-0">
            <div className="ml-[10px]"><S w={16} h={18}><path d="M3.500 3.500h10v13h-10z" fill="#fff" stroke="#222" /><path d="M1 7l6-5 4 4-5 5z" fill="#c8a04a" /><path d="M5 1h4v3H5z" fill="#d9302b" /><path d="M5 9h6M5 12h6" stroke="#3f7cb8" /></S></div>
            <span className="ml-[4px] text-[11.500px] whitespace-nowrap">Microsoft Visual Basic for Applications - Book1 - [Module1 (Code)]</span>
            <div className="ml-auto flex items-center gap-[35px] pr-[17px]">
                <S w={11} h={1}><path d="M0 .5h11" stroke="#000" /></S>
                <S w={11} h={12}><rect x=".5" y=".5" width="10" height="11" stroke="#000" /></S>
                <S w={11} h={11}><path d="M.5 .5l10 10M10.500 .5l-10 10" stroke="#000" /></S>
            </div>
        </div>
        {/* menu */}
        <div className="h-[26px] bg-[#f9f9f9] flex items-center text-[11.500px] shrink-0">
            <div className="ml-[11px]"><S w={17} h={17}><path d="M3 9l6-7 6 7-6 6z" fill="#3ab868" /><path d="M5 4l3 3-3 3-3-3z" fill="#e03bb0" /><path d="M10 7h5v4h-5z" fill="#2f6ac8" /><path d="M1 7l14 3" stroke="#222" /><path d="M9 12l3 4-3 1z" fill="#e8d02a" /></S></div>
            <div className="flex gap-[15.300px] ml-[10px]">
                {[['F', 'ile'], ['E', 'dit'], ['V', 'iew'], ['I', 'nsert'], ['', 'Format'], ['D', 'ebug'], ['R', 'un'], ['T', 'ools'], ['A', 'dd-Ins'], ['W', 'indow'], ['H', 'elp']].map(([u, r]) => (
                    <span key={r}><span className="underline">{u}</span>{r}</span>
                ))}
            </div>
            <div className="ml-auto flex items-center gap-[10px] pr-[6px]">
                <S w={8} h={8}><path d="M0 7h7v1H0z" fill="#000" /></S>
                <S w={10} h={10}><path d="M3 1.500h6.500v5M.5 3.500h6v6h-6z" stroke="#000" /><path d="M.5 4.500h6" stroke="#000" strokeWidth="1.500" /></S>
                <S w={9} h={9}><path d="M1 1l7 7M8 1 1 8" stroke="#000" strokeWidth="1.300" /></S>
            </div>
        </div>
        {/* toolbars */}
        <div className="h-[26px] bg-[#f9f9f9] flex shrink-0 pl-[4px]">
            <div className="w-[663px] h-[25px] bg-[#f0f0f0] rounded-l-[2px] flex items-center">
                <Grip />
                <T n="excel" w={23} />
                <T n="view" arrow w={34} />
                <T n="save" />
                <Sep /><T n="cut" /><T n="copy" /><T n="paste" /><T n="find" />
                <Sep /><T n="undo" /><T n="redo" />
                <div className="w-[3px] shrink-0" />
                <Sep /><T n="run" /><T n="pause" /><T n="stop" /><T n="design" />
                <Sep /><T n="project" /><T n="props" /><T n="toolbox" /><T n="tools" />
                <Sep /><T n="help" />
                <Sep />
                <div className="w-[182px] h-[23px] bg-[#eeeeee] flex items-center text-[12px] pl-[4px]">Ln 3, Col 16</div>
                <EndGrip />
            </div>
        </div>
        <div className="h-[25px] bg-[#f9f9f9] flex shrink-0 pl-[4px] gap-[4px] border-b border-[#a0a0a0]">
            <div className="w-[360px] h-[25px] bg-[#f0f0f0] flex items-center">
                <Grip />
                <T n="list" /><T n="con" /><T n="para" /><T n="info" /><T n="az" />
                <Sep /><T n="indent" /><T n="outdent" />
                <Sep /><T n="hand" /><T n="comment" /><T n="uncomment" />
                <Sep /><T n="flag" /><T n="flagG" /><T n="flagG" /><T n="flagG" />
                <EndGrip />
            </div>
            <div className="w-[334px] h-[25px] bg-[#f0f0f0] flex items-center">
                <Grip />
                <T n="design" />
                <Sep /><T n="run" /><T n="pause" /><T n="stop" />
                <Sep /><T n="hand" /><T n="bp" /><T n="bpG" /><T n="stG" />
                <Sep /><T n="form" /><T n="formR" /><T n="formG" /><T n="glass" />
                <EndGrip dbl />
            </div>
            <div className="flex-1 h-[25px] bg-[#f0f0f0] flex items-center">
                <Grip />
                <T n="g1" /><T n="g2" /><T n="g3" /><T n="g4" />
                <Sep /><T n="g5" arrow w={31} /><T n="g6" arrow w={33} /><T n="g7" arrow w={33} />
                <EndGrip dbl />
            </div>
        </div>
        {/* panes */}
        <div className="flex flex-1 min-h-0">
            <div className="w-[212px] shrink-0 flex flex-col text-[10.500px]">
                <PaneTitle t="Project - VBAProject" className="" />
                <div className="h-[23px] mt-[2px] bg-[#f0f0f0] flex items-center pl-[9px] gap-[6px] shrink-0">
                    <S><rect x="1.500" y="2.500" width="13" height="12" fill="#fff" stroke="#4e78b8" /><rect x="1" y="2" width="14" height="3" fill="#4e78b8" /><path d="M3 8h4M3 11h4M9 8h4M9 11h4" stroke="#d9452b" /></S>
                    <S><rect x="1.500" y="2.500" width="13" height="12" fill="#eee" stroke="#bbb" /><path d="M3 6h10M3 9h4M3 12h4M9 9h4M9 12h4" stroke="#bbb" /></S>
                    <div className="w-px h-[18px] bg-[#ccc]" />
                    <div className="w-[22px] h-[22px] bg-[#d5e8f7] border border-[#2e8fd8] flex items-center justify-center">
                        <S><path d="M1 3h5l1 2h8v9H1z" fill="#e8b84a" stroke="#7a5a10" /></S>
                    </div>
                    <div className="ml-auto self-stretch w-[10px] bg-[#a3a3a3] rounded-r-[3px] flex flex-col items-center justify-end pb-[2px]">
                        <div className="w-[7px] border-t border-black mb-[1px]" />
                        <div className="w-0 h-0 border-l-[3.5px] border-r-[3.5px] border-t-[4px] border-l-transparent border-r-transparent border-t-black" />
                    </div>
                </div>
                <div className="h-[474px] mt-[3px] mx-px bg-white border-t-2 border-[#8a8a8a] border-r border-b border-r-[#d8d8d8] border-b-[#d8d8d8] pt-[1px] shrink-0">
                    {treeRows.map((r) => (
                        <div key={r.t} className="h-[16px] flex items-center">
                            <S w={r.w} h={16}>{r.pre}</S>
                            <S>{r.icon}</S>
                            <span className={`leading-[16px] whitespace-nowrap ${r.cls}`}>{r.t}</span>
                        </div>
                    ))}
                </div>
                <PaneTitle t="Properties - Module1" className="mt-[7px]" />
                <div className="h-[19px] mt-[5px] mx-px bg-white border border-[#777] flex items-center pl-[2px] shrink-0 whitespace-nowrap">
                    <b className="text-[11.500px]">Module1</b>&nbsp;Module
                    <div className="ml-auto mr-[4px]"><Chev /></div>
                </div>
                <div className="h-[20px] mt-[2px] flex items-end shrink-0">
                    <div className="w-[66px] h-[20px] bg-white text-center leading-[17px] ml-px">Alphabetic</div>
                    <div className="w-[66px] h-[18px] bg-[#f5f5f5] border border-[#ddd] text-center leading-[17px]">Categorized</div>
                </div>
                <div className="flex-1 mx-[1px] mb-[4px] bg-[#f0f0f0] border border-t-0 border-[#d8d8d8] px-[3px] pb-[3px] pt-[1px] flex">
                    <div className="flex-1 bg-white border border-[#888] border-t-2 pt-[2px]">
                        <div className="h-[16px] flex border-b border-[#c0c0c0] leading-[16px]">
                            <div className="w-[38px] border-r border-[#c0c0c0] pl-[1px] bg-[#f8f8f8]">(Name)</div>
                            <div className="pl-[2px]">Module1</div>
                        </div>
                    </div>
                </div>
            </div>
            <div className="w-[8px] shrink-0" />
            <div className="flex-1 flex flex-col min-w-0">
                {/* code window */}
                <div className="h-[711px] flex flex-col bg-[#f0f0f0] border-b-2 border-[#c8c8c8] shrink-0">
                    <div className="h-[28px] flex items-start pt-[4px] pl-[11px] gap-[10px] shrink-0 text-[12px] font-['DejaVu_Sans',sans-serif]">
                        <div className="w-[353px] h-[22px] bg-white border border-[#777] flex items-center pl-[2px]">(General)<div className="ml-auto mr-[5px]"><Chev /></div></div>
                        <div className="w-[354px] h-[22px] bg-white border border-[#777] flex items-center pl-[3px]">lr_filter<div className="ml-auto mr-[5px]"><Chev /></div></div>
                    </div>
                    <div className="flex flex-1 min-h-0 border-t-2 border-[#a0a0a0] border-l border-l-[#a0a0a0]">
                        <div className="w-[23px] bg-[#f0f0f0] border-r border-black shrink-0" />
                        <div className="flex-1 bg-white flex flex-col text-[16.500px] leading-[18px] pt-[3px] whitespace-nowrap text-black font-['DejaVu_Sans',sans-serif]">
                            <div className="h-[18px] border-b border-[#a0a0a0] pl-[11px] text-[#00007f]">Option Explicit</div>
                            <div className="h-[18px]" />
                            {codeLines.map((l, idx) => (
                                <div key={idx} className={`h-[18px] ${indent[l.i]} flex`}>
                                    <span className="whitespace-pre">
                                        {l.p.map(([t, kw], j) => <span key={j} className={kw ? 'text-[#00007f]' : ''}>{t}</span>)}
                                    </span>
                                    {idx === 0 && <span className="w-px h-[17px] bg-black" />}
                                </div>
                            ))}
                        </div>
                        <div className="w-[21px] flex flex-col items-center shrink-0">
                            <div className="w-full h-[7px] bg-white border-b border-[#888]" />
                            <div className="h-[17px] flex items-center"><VArrow up /></div>
                            <div className="w-[19px] flex-1 bg-[#cdcdcd]" />
                            <div className="h-[18px] flex items-center"><VArrow /></div>
                        </div>
                    </div>
                    <div className="h-[17px] flex items-center shrink-0 bg-[#f0f0f0]">
                        <div className="w-[15px] h-[16px] ml-[3px] bg-white border border-[#888] flex flex-col items-center gap-[2px] pt-[3px]"><div className="w-[8px] h-px bg-black" /><div className="w-[8px] h-px bg-black" /></div>
                        <div className="w-[15px] h-[16px] bg-[#ddd] border border-[#888] flex flex-col items-center gap-px pt-[2px]"><div className="w-[8px] h-px bg-black" /><div className="w-[8px] h-px bg-black" /><div className="w-[8px] h-px bg-black" /><div className="w-[8px] h-px bg-black" /></div>
                        <div className="ml-[9px]"><HArrow left /></div>
                        <div className="ml-[5px] w-[54px] h-[16px] bg-[#cdcdcd]" />
                        <div className="ml-auto mr-[26px]"><HArrow /></div>
                    </div>
                </div>
                {/* bottom panes */}
                <div className="flex flex-1 min-h-0 pt-[8px] gap-[7px]">
                    <div className="w-[90px] shrink-0 flex flex-col text-[11.500px]">
                        <PaneTitle t="Watches" className="" />
                        <div className="flex flex-1 mt-[2px] mb-[1px] min-h-0">
                            <div className="flex-1 bg-white border-t border-l border-[#888]">
                                <div className="h-[16px] flex border-b border-[#888] bg-[#f5f5f5] leading-[15px] overflow-hidden">
                                    <div className="w-[23px] border-r border-[#aaa] pl-[5px] overflow-hidden">Exp</div>
                                    <div className="w-[14px] border-r border-[#aaa] pl-[3px]">V</div>
                                    <div className="w-[18px] border-r border-[#aaa] pl-[3px]">Ty</div>
                                    <div className="pl-[3px]">Co</div>
                                </div>
                            </div>
                            <div className="w-[17px] flex flex-col items-center bg-[#f0f0f0]">
                                <div className="h-[17px] flex items-center"><VArrow up /></div>
                                <div className="w-[15px] flex-1 bg-[#cdcdcd]" />
                                <div className="h-[18px] flex items-center"><VArrow /></div>
                            </div>
                        </div>
                    </div>
                    <div className="flex-1 flex flex-col min-w-0">
                        <PaneTitle t="Immediate" className="mr-[2px]" />
                        <div className="flex-1 flex flex-col mt-[2px] mb-[2px] mr-[1px] border-t-2 border-l border-[#888] min-h-0">
                            <div className="flex flex-1 min-h-0">
                                <div className="flex-1 bg-white pl-[19px] text-[16.500px] leading-[18px] pt-[3px] font-['DejaVu_Sans',sans-serif]"><div>11</div><div>11</div></div>
                                <div className="w-[19px] flex flex-col items-center">
                                    <div className="h-[16px] flex items-center"><VArrow up /></div>
                                    <div className="w-[17px] flex-1 bg-[#cdcdcd]" />
                                    <div className="h-[18px] flex items-center"><VArrow /></div>
                                </div>
                            </div>
                            <div className="h-[16px] flex items-center shrink-0 pl-[4px] bg-[#f0f0f0]">
                                <HArrow left />
                                <div className="ml-[3px] w-[24px] h-[15px] bg-[#cdcdcd]" />
                                <div className="ml-auto mr-[12px]"><HArrow /></div>
                            </div>
                        </div>
                    </div>
                </div>
            </div>
        </div>
    </div>
);

const Taskbar = () => (
    <div className="h-[40px] shrink-0 flex items-center bg-[#1f3442] text-white font-['Noto_Sans',sans-serif]">
        <div className="ml-[16px]"><S w={16} h={16}><path d="M0 2.500 7 1.500v6H0zM8 1.400 16 0v7.500H8zM0 8.500h7v6l-7-1zM8 8.500h8V16l-8-1.400z" fill="#fff" /></S></div>
        <div className="ml-[17px] w-[343px] h-[39px] mt-px bg-[#303030] border border-[#4a4a4a] flex items-center pl-[11px] gap-[11px] text-[#d6d6d6] text-[14px]">
            <S w={16} h={16}><circle cx="9.500" cy="6" r="5" stroke="#ddd" /><path d="M6 10 1 15.500" stroke="#ddd" /></S>
            Type here to search
        </div>
        <div className="ml-[16px]"><S w={16} h={16}><circle cx="8" cy="8" r="6.500" stroke="#fff" strokeWidth="2" /></S></div>
        <div className="ml-[31px]"><S w={17} h={16}><path d="M1 1h7M1 15h7M1 4.500h9v7H1zM13 1h3M13 15h3M13 4h3v8h-3" stroke="#fff" /></S></div>
        <div className="ml-[23px] w-[40px] h-full flex items-center justify-center border-b-[3px] border-[#76b9ed] pt-[3px]">
            <S w={26} h={26}>
                <circle cx="13" cy="13" r="13" fill="#1e88d6" />
                <path d="M2 9C5 1 21-2 25 9c1 4-4 6-8 4 2-6-10-8-12 2-1 5 3 10 9 11C8 27 0 20 2 9z" fill="#3fc6a0" />
                <path d="M5 15c2-10 14-8 12-2-6 0-6 5-1 9 3 2 6 1 8-1-3 5-10 6-14 5-6-1-6-7-5-11z" fill="#0f4f9c" />
            </S>
        </div>
        <div className="ml-[9px] w-[40px] h-full flex items-center justify-center">
            <S w={24} h={20}>
                <path d="M0 1h9l2 2h13v17H0z" fill="#e9b22a" />
                <path d="M0 5h24v15H0z" fill="#f7d668" />
                <path d="M6 19v-5l6-4 6 4v5h-4v-3h-4v3z" fill="#2b8fd8" />
            </S>
        </div>
        <div className="ml-[10px] w-[40px] h-full flex items-center justify-center border-b-[3px] border-[#76b9ed] pt-[3px]">
            <S w={24} h={24}>
                <circle cx="12" cy="12" r="12" fill="#e2c12e" />
                <path d="M12 0a12 12 0 0 1 10.400 6H12a6 6 0 0 0-5.200 3L3.500 3.500A12 12 0 0 1 12 0z" fill="#d9402f" />
                <path d="M1.600 6 6.800 15a6 6 0 0 0 5.200 3l-3.300 5.500A12 12 0 0 1 1.600 6z" fill="#3ea653" />
                <circle cx="12" cy="12" r="5.500" fill="#fff" />
                <circle cx="12" cy="12" r="4.300" fill="#4c88ee" />
            </S>
        </div>
        <div className="ml-[5px] w-[44px] h-full bg-[#4c5f69] flex items-center justify-center border-b-[3px] border-[#76b9ed] border-r border-r-[#5a6c76] pt-[3px]">
            <S w={24} h={24}>
                <rect x="6" y="1" width="18" height="22" rx="1" fill="#21a366" />
                <path d="M15 1h8a1 1 0 0 1 1 1v5h-9z" fill="#33c481" />
                <rect x="15" y="12" width="9" height="6" fill="#107c41" />
                <path d="M6 18h18v4a1 1 0 0 1-1 1H7a1 1 0 0 1-1-1z" fill="#185c37" />
                <rect y="6" width="12" height="12" rx="1" fill="#107c41" />
                <path d="M3 9l6 6M9 9l-6 6" stroke="#fff" strokeWidth="1.700" />
            </S>
        </div>
        <div className="ml-auto flex items-center">
            <S w={24} h={24}>
                <path d="M9 0l3 6 3 0-4 6z" fill="#f4c42a" />
                <path d="M12 4c4 5 7 8 6 13-1 6-11 6-13 1-1-4 3-10 7-14z" fill="#b7dcf4" />
                <path d="M9 15v4M13 13v6" stroke="#4c9ad8" strokeWidth="2" />
            </S>
            <span className="ml-[9px] text-[12.500px]">25°C</span>
            <span className="ml-[11px] text-[12.500px]">Rain showers</span>
            <div className="ml-[16px]"><S w={12} h={7}><path d="M.5 6.500 6 1l5.500 5.500" stroke="#fff" /></S></div>
            <div className="ml-[10px]"><S w={16} h={15}><path d="M4.500 .5h11v8h-11zM.5 5.500h7v6h-7zM4 11.500v3M1 14.500h6" stroke="#fff" /></S></div>
            <div className="ml-[8px]"><S w={16} h={14}><path d="M1 5h3l4-4v12L4 9H1zM10.500 4c1 2 1 4 0 6M12.500 2.500c2 3 2 6 0 9" stroke="#fff" /></S></div>
            <div className="ml-[3px] w-[64px] flex flex-col items-center text-[12px] leading-[18px]">
                <span>21:53</span><span>30-Aug-21</span>
            </div>
            <div className="ml-[15px] mr-[24px]"><S w={16} h={16}><path d="M.5 .5h15v11H9.500l-2 3v-3h-7z" stroke="#fff" /></S></div>
        </div>
    </div>
);

export default function App() {
    return (
        <div className="w-[1920px] h-[1080px] flex flex-col overflow-hidden bg-[#1f3442] font-['Noto_Sans',sans-serif]">
            <div className="h-[1040px] flex shrink-0">
                <Excel />
                <Vba />
            </div>
            <Taskbar />
        </div>
    );
}
